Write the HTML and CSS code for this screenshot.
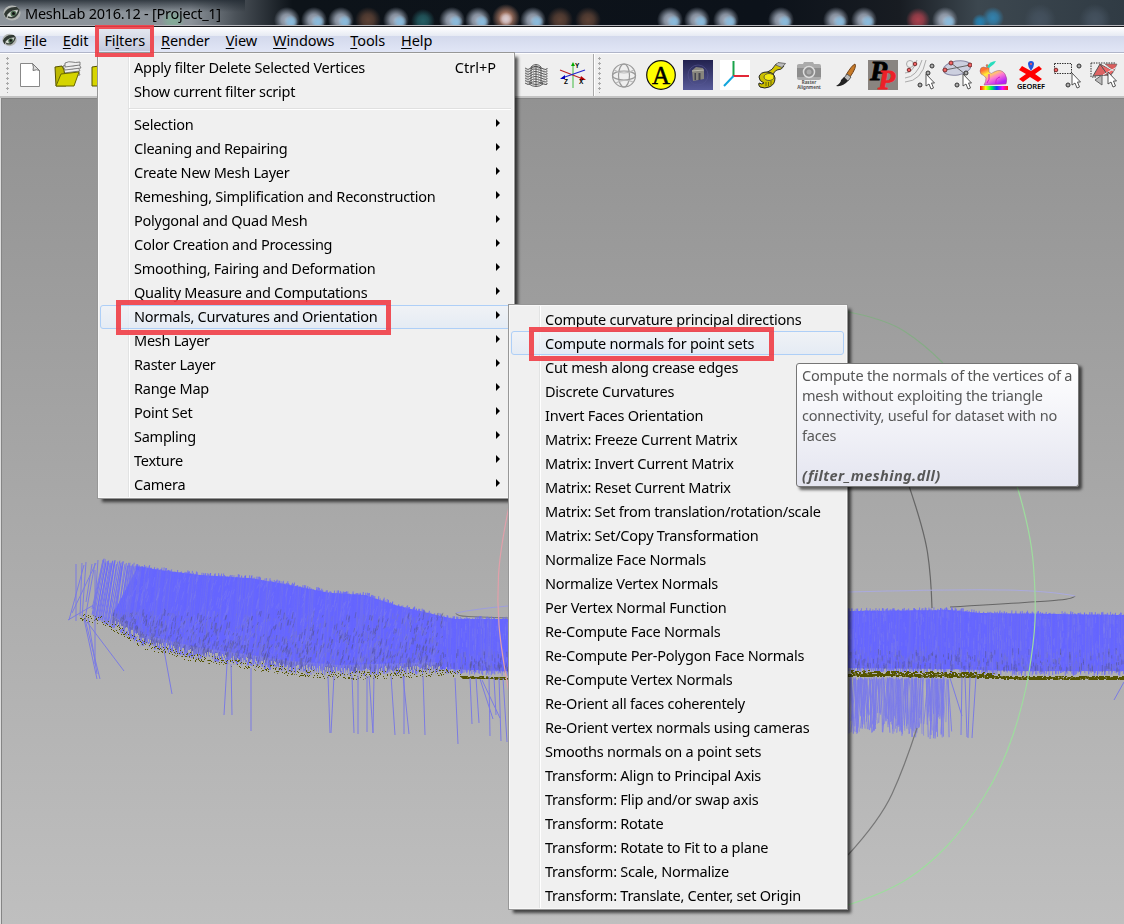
FILE: index.html
```html
<!DOCTYPE html>
<html lang="en">
<head>
<meta charset="utf-8">
<title>MeshLab 2016.12 - [Project_1]</title>
<link rel="stylesheet" href="styles.css">
</head>
<body>
<div class="window">
  <header class="titlebar">
    <canvas class="glass" width="1124" height="25"></canvas>
    <svg class="eye" viewBox="0 0 18 16"><use href="#eye"/></svg>
    <span class="title-text">MeshLab 2016.12 - [Project_1]</span>
  </header>
  <nav class="menubar">
    <svg class="eye eye-small" viewBox="0 0 18 16"><g id="eye"><ellipse cx="9" cy="8" rx="8.600" ry="7.400" fill="#b4b7b4"/><path d="M1 9Q4 1 14 2L17 5Q10 4 6 8L3 13Z" fill="#303833"/><path d="M4 10Q9 5 16 6Q15 11 10 12.500Q6 13 4 10Z" fill="#d4dad3"/><circle cx="10.500" cy="8.800" r="3" fill="#527155"/><circle cx="10.500" cy="8.600" r="1.500" fill="#111"/><path d="M5 12Q13 15 16 5" stroke="#353d37" stroke-width="1.500" fill="none"/></g></svg>
    <span class="menu-title"><u>F</u>ile</span>
    <span class="menu-title"><u>E</u>dit</span>
    <span class="menu-title open">Fi<u>l</u>ters</span>
    <span class="menu-title"><u>R</u>ender</span>
    <span class="menu-title"><u>V</u>iew</span>
    <span class="menu-title"><u>W</u>indows</span>
    <span class="menu-title"><u>T</u>ools</span>
    <span class="menu-title"><u>H</u>elp</span>
  </nav>
  <div class="toolbar">
    <div class="tools tools-file">
      <i class="grip"></i>
      <svg class="tool" viewBox="0 0 30 30"><path d="M5.500 3.500h12l7 7v16h-19z" fill="#fff" stroke="#888"/><path d="M17.500 3.500Q19 7 18 10.500Q22 9 24.500 10.500Z" fill="#ddd" stroke="#777"/></svg>
      <svg class="tool" viewBox="0 0 30 30"><g fill="#eee" stroke="#666" stroke-width=".8"><path d="M10 12q4-3 7-1t9-1l2 5-16 2z"/><path d="M10 9q4-3 7-1t9-1l2 4-16 2z"/><path d="M11 6q4-3 7-1t9-1l2 4-16 2z"/><path d="M13 3q4-2 7-1t8 0v3l-15 2z"/></g><path d="M3 7l7-1 2 4 2 16H4z" fill="#bdb900" stroke="#555200"/><path d="M4 26l5-12 18-2-5 14z" fill="#d5d400" stroke="#686700"/></svg>
      <svg class="tool" viewBox="0 0 30 30"><path d="M3 7l7-1 2 4h14v16H3z" fill="#d7d500" stroke="#555200"/></svg>
    </div>
    <div class="tools tools-view">
      <svg class="tool" viewBox="0 0 30 30"><g fill="none" stroke="#444" stroke-width=".9"><path d="M4 8q3 3 6 0t10 0t6 0M4 10.500q3 3 6 0t10 0t6 0M4 13q3 3 6 0t10 0t6 0M4 15.500q3 3 6 0t10 0t6 0M4 18q3 3 6 0t10 0t6 0M4 20.500q3 3 6 0t10 0t6 0M4 23q3 3 6 0t10 0t6 0"/><path d="M10 7q5-5 10 0M10 9q5-5 10 0M8 24q7 5 14 0M8 22q7 5 14 0" /><path d="M10 7v16M20 7v16M15 5v21" stroke="#555"/><path d="M5 8v14M7 9v15M12.500 6v19M17.500 6v19M23 9v15M25.500 8v14" stroke="#999" stroke-width=".7"/></g></svg>
      <svg class="tool" viewBox="0 0 30 30"><path d="M15 5v23" stroke="#98d598" stroke-width="2"/><path d="M15 2l-2 4h4z" fill="#00a900"/><path d="M2 10l23 9" stroke="#b22" stroke-width="1.200"/><path d="M27 10L4 18" stroke="#22c" stroke-width="1.200"/><path d="M23 16l5 4-6 0z" fill="#b00"/><path d="M2 19l5-4v4z" fill="#00b"/><g class="axis-label"><text x="17" y="8">Y</text><text x="6" y="24">Z</text><text x="21" y="24">X</text></g></svg>
    </div>
    <div class="tools tools-edit">
      <i class="grip"></i>
      <svg class="tool" viewBox="0 0 30 30"><g fill="none" stroke="#999" stroke-width="1.200"><circle cx="15" cy="15.500" r="11.500"/><ellipse cx="15" cy="15.500" rx="5.500" ry="11.500"/><ellipse cx="15" cy="15.500" rx="11.500" ry="4.500"/><path d="M5 10Q15 16 25 10M7 23Q15 18 24 22" stroke="#bbb"/></g></svg>
      <svg class="tool" viewBox="0 0 30 30"><circle cx="15" cy="15" r="14.300" fill="#ff0" stroke="#111" stroke-width="1.200"/><text class="letter-a" x="15" y="23.500">A</text></svg>
      <svg class="tool" viewBox="0 0 30 30"><defs><linearGradient id="night" x2="0" y2="1"><stop stop-color="#22224f"/><stop offset="1" stop-color="#585b99"/></linearGradient></defs><path d="M0 0h30v30H0z" fill="url(#night)"/><circle cx="15" cy="15" r="10" fill="none" stroke="#555592" stroke-width=".6"/><path d="M9 10.500l4-3.500 7 1 1 3v8l-11 2z" fill="#87857d"/><path d="M11.500 13h1.500v7h-1.500zM15.500 13h2v7h-2z" fill="#454550"/><path d="M9 11l12-1" stroke="#bab8ad"/></svg>
      <svg class="tool" viewBox="0 0 30 30"><path d="M0 0h30v30H0z" fill="#fff"/><path d="M13.500 1v15" stroke="#19a34a" stroke-width="2"/><path d="M13 16h16" stroke="#e22736" stroke-width="2"/><path d="M13.500 16l-9.500 10" stroke="#11a5dc" stroke-width="2"/></svg>
      <svg class="tool" viewBox="0 0 30 30"><path d="M9 13Q16 10 19 4L27 6Q25 10 20 10Q17 11 16 15Z" fill="#d4c600" stroke="#333"/><path d="M18.500 5L21 2.500l7.500 1-3.500 4z" fill="#bbb" stroke="#555" stroke-width=".8"/><path d="M2 17Q3 12 10 12Q17 12 18 18Q18 25 12 27Q8 29 3 27Q1 25 2 23Q5 25 7 23Q2 21 2 17Z" fill="#c9bd00" stroke="#222"/><ellipse cx="12" cy="17" rx="5" ry="3.500" fill="#f2e810" stroke="#444" stroke-width=".8"/><path d="M9 22v4M11.500 22v4M14 21v4" stroke="#555200" stroke-width=".8"/></svg>
      <svg class="tool" viewBox="0 0 30 30"><path d="M3 5.500q0-1.500 2-1.500h4l1-2h9l1 2h5q2 0 2 2v12q0 2-2 2H5q-2 0-2-2z" fill="#ababab"/><path d="M3 8h24v9H3z" fill="#8d8d8d"/><circle cx="15" cy="12" r="5.500" fill="#8a8a8a" stroke="#ddd" stroke-width="1.500"/><circle cx="15" cy="12" r="2.500" fill="#aaa"/><g class="caption"><text x="15" y="24">Raster</text><text x="15" y="29">Alignment</text></g></svg>
      <svg class="tool" viewBox="0 0 30 30"><path d="M24 4Q26 7 19 17L15 15Q21 5 24 4Z" fill="#c77a27" stroke="#70421a"/><path d="M16 14l4 3-3 4-4-3z" fill="#bbb" stroke="#555"/><path d="M13 17l4 4Q12 27 5 26Q10 23 10 20Z" fill="#222"/></svg>
      <svg class="tool" viewBox="0 0 30 30"><path d="M0 0h30v30H0z" fill="#898480"/><text class="letter-p" x="2" y="20">P</text><text class="letter-p red" x="10" y="29">P</text></svg>
      <svg class="tool" viewBox="0 0 30 30"><g fill="none" stroke="#aaa"><circle cx="5" cy="4" r="3.500"/><path d="M0 13Q8 13 12 0M0 18Q12 17 17 0M0 22Q17 21 21 0"/></g><circle class="node-red" cx="10" cy="4" r="1.800"/><circle class="node-red" cx="4" cy="10" r="1.800"/><circle class="node" cx="27" cy="6" r="2"/><circle class="node" cx="23" cy="13" r="2"/><circle class="node" cx="15" cy="25" r="2"/><path id="pointer" class="pointer" d="M21 14v12l3-2 2 5 2.500-1-2-5h3z"/></svg>
      <svg class="tool" viewBox="0 0 30 30"><ellipse cx="15" cy="8" rx="14" ry="7" transform="rotate(-10 15 8)" fill="#cccfdf" stroke="#8888a5"/><path d="M3 10L28 5M9 3l14 11" stroke="#666"/><circle class="node-red" cx="3" cy="10" r="2"/><circle class="node-red" cx="9" cy="3" r="2"/><circle class="node-red" cx="28" cy="5" r="2"/><circle class="node" cx="24" cy="13" r="2"/><circle class="node" cx="15" cy="25" r="2"/><use href="#pointer"/></svg>
      <svg class="tool" viewBox="0 0 30 30"><defs><linearGradient id="rainbow"><stop stop-color="#f02"/><stop offset=".2" stop-color="#ff0"/><stop offset=".4" stop-color="#0f4"/><stop offset=".6" stop-color="#04f"/><stop offset=".8" stop-color="#f0f"/><stop offset="1" stop-color="#f20"/></linearGradient><linearGradient id="fur" x2=".6" y2="1"><stop stop-color="#ffa400"/><stop offset=".25" stop-color="#ff6a36"/><stop offset=".45" stop-color="#ffef36"/><stop offset=".7" stop-color="#ff7dd0"/><stop offset="1" stop-color="#b520fa"/></linearGradient></defs><path d="M7 5Q9 3 10 8L10 12Q12 15 15 12Q22 8 26 14Q29 19 27 24L5 25Q7 22 7 18Q5 15 2 14Q0 11 2 8Q4 6 8 8Z" fill="url(#fur)" stroke="#96506e" stroke-width=".5"/><path d="M8 7Q11 1 17 1L15 4L10 8Z" fill="#27ddbc"/><path d="M17 24Q16 18 21 17M10 14Q11 20 8 23" fill="none" stroke="#d51ec9"/><path d="M1 26h28v4H1z" fill="url(#rainbow)"/></svg>
      <svg class="tool" viewBox="0 0 30 30"><path d="M6 6l9 5 8-5 3 3-7 5 7 5-4 3-8-5-7 5-4-3 7-5-7-4z" fill="#f00"/><path d="M12 4a3 3 0 016 0q0 3-3 7q-3-4-3-7" fill="#2455dc"/><circle cx="15" cy="4" r="1" fill="#ff5e50"/><text class="georef" x="15" y="29">GEOREF</text></svg>
      <svg class="tool" viewBox="0 0 30 30"><path d="M1.500 3.500h17v10h-17z" fill="none" stroke="#333" stroke-dasharray="1.500 1"/><circle class="node-red" cx="3" cy="10" r="1.800"/><circle class="node" cx="26" cy="6" r="2"/><circle class="node" cx="15" cy="25" r="2"/><use href="#pointer" x="-2" y="-1"/></svg>
      <svg class="tool" viewBox="0 0 30 30"><path d="M1 3h24M1 3v14h6" fill="none" stroke="#333" stroke-dasharray="1.500 1"/><path d="M3 16l7-12 8 11z" fill="#dd6464" stroke="#555"/><path d="M10 4l14 7-5 6z" fill="#e66" stroke="#555"/><path d="M15 4h12l-3 7z" fill="#db5d5d" stroke="#666" stroke-width=".6"/><path d="M12 4l15 9M13 15L27 7" stroke="#eee"/><path d="M5 20l7-5v10z" fill="#bbb" stroke="#666"/><use href="#pointer" x="-3" y="-2"/></svg>
    </div>
  </div>
  <main class="viewport">
    <canvas class="scene" width="1122" height="826"></canvas>
  </main>
</div>

<div class="menu filters-menu">
  <div class="item">Apply filter Delete Selected Vertices<span class="shortcut">Ctrl+P</span></div>
  <div class="item">Show current filter script</div>
  <div class="separator"></div>
  <div class="item sub">Selection</div>
  <div class="item sub">Cleaning and Repairing</div>
  <div class="item sub">Create New Mesh Layer</div>
  <div class="item sub">Remeshing, Simplification and Reconstruction</div>
  <div class="item sub">Polygonal and Quad Mesh</div>
  <div class="item sub">Color Creation and Processing</div>
  <div class="item sub">Smoothing, Fairing and Deformation</div>
  <div class="item sub">Quality Measure and Computations</div>
  <div class="item sub active">Normals, Curvatures and Orientation</div>
  <div class="item sub">Mesh Layer</div>
  <div class="item sub">Raster Layer</div>
  <div class="item sub">Range Map</div>
  <div class="item sub">Point Set</div>
  <div class="item sub">Sampling</div>
  <div class="item sub">Texture</div>
  <div class="item sub">Camera</div>
</div>

<div class="menu normals-menu">
  <div class="item">Compute curvature principal directions</div>
  <div class="item active">Compute normals for point sets</div>
  <div class="item">Cut mesh along crease edges</div>
  <div class="item">Discrete Curvatures</div>
  <div class="item">Invert Faces Orientation</div>
  <div class="item">Matrix: Freeze Current Matrix</div>
  <div class="item">Matrix: Invert Current Matrix</div>
  <div class="item">Matrix: Reset Current Matrix</div>
  <div class="item">Matrix: Set from translation/rotation/scale</div>
  <div class="item">Matrix: Set/Copy Transformation</div>
  <div class="item">Normalize Face Normals</div>
  <div class="item">Normalize Vertex Normals</div>
  <div class="item">Per Vertex Normal Function</div>
  <div class="item">Re-Compute Face Normals</div>
  <div class="item">Re-Compute Per-Polygon Face Normals</div>
  <div class="item">Re-Compute Vertex Normals</div>
  <div class="item">Re-Orient all faces coherentely</div>
  <div class="item">Re-Orient vertex normals using cameras</div>
  <div class="item">Smooths normals on a point sets</div>
  <div class="item">Transform: Align to Principal Axis</div>
  <div class="item">Transform: Flip and/or swap axis</div>
  <div class="item">Transform: Rotate</div>
  <div class="item">Transform: Rotate to Fit to a plane</div>
  <div class="item">Transform: Scale, Normalize</div>
  <div class="item">Transform: Translate, Center, set Origin</div>
</div>

<div class="tooltip">Compute the normals of the vertices of a<br>mesh without exploiting the triangle<br>connectivity, useful for dataset with no<br>faces<br><br><strong>(filter_meshing.dll)</strong></div>

<div class="mark mark-filters"></div>
<div class="mark mark-category"></div>
<div class="mark mark-command"></div>
<script src="scene.js"></script>
</body>
</html>
```
FILE: styles.css
```css
* { box-sizing: border-box; }
body {
  margin: 0;
  width: 1124px;
  height: 924px;
  overflow: hidden;
  position: relative;
  font: 14.5px/24px "Noto Sans", "Open Sans", sans-serif;
  letter-spacing: -0.25px;
  color: #000;
}
.window { display: flex; flex-direction: column; height: 924px; }

.titlebar {
  height: 27px;
  position: relative;
  display: flex;
  align-items: center;
  padding: 0 0 0 3px;
  gap: 4px;
  background: #0c1016;
  border-bottom: 1px solid #15171b;
  box-shadow: inset 0 -1px #b5b5ba;
}
.glass { position: absolute; left: 0; top: 0; }
.eye { position: relative; width: 18px; height: 16px; flex: none; }
.title-text { position: relative; color: #000; line-height: 26px; }

.menubar {
  height: 26px;
  display: flex;
  align-items: stretch;
  padding-left: 2px;
  background: linear-gradient(#fff, #e6eaf3 9px, #d3d9ec 9px, #e1e6f6 25px);
  border-bottom: 1px solid #b0b5c9;
}
.eye-small { width: 15px; height: 14px; margin: 6px -1px 0 0; }
.menu-title { padding: 0 8px; line-height: 27px; letter-spacing: -0.1px; }
.menu-title u { text-decoration-thickness: 1px; text-underline-offset: 2px; }
.menu-title.open {
  margin: 1px 0;
  line-height: 25px;
  border-radius: 3px;
  background: linear-gradient(#e5e8f0, #c4cadd);
}

.toolbar {
  height: 45px;
  display: flex;
  background: #efefef;
  border-top: 1px solid #fff;
  border-bottom: 2px solid #c3c3c3;
}
.tools { display: flex; align-items: center; gap: 7px; }
.tools-file { width: 512px; padding-left: 6px; }
.tools-view { width: 82px; padding-left: 9px; border-right: 1px solid #aaa; }
.tools-edit { padding-left: 4px; box-shadow: inset 1px 0 #fff; }
.grip {
  width: 4px;
  height: 36px;
  margin-right: -2px;
  background: radial-gradient(circle at 1.5px 1.5px, #aaa 1px, transparent 1.4px) 0 0 / 4px 5px;
}
.tools-edit .grip { margin-right: 0; }
.tool { width: 30px; height: 30px; flex: none; }
.axis-label { font: bold 6.5px "Liberation Sans", sans-serif; letter-spacing: 0; }
.letter-a { font: 25px "Liberation Serif", serif; text-anchor: middle; stroke: #000; stroke-width: .5; }
.letter-p { font: italic bold 28px "Liberation Serif", serif; stroke: #000; stroke-width: .8; }
.letter-p.red { fill: #ec2027; stroke: #ec2027; }
.caption { font: bold 4.5px "Noto Sans", sans-serif; text-anchor: middle; letter-spacing: 0; fill: #555; }
.georef { font: 600 7.5px "Noto Sans", sans-serif; letter-spacing: -.1px; text-anchor: middle; }
.node { fill: #aaa; stroke: #333; }
.node-red { fill: #f26363; stroke: #782d2d; }
.pointer { fill: #fff; stroke: #444; stroke-width: .9; }

.viewport {
  flex: 1;
  padding-left: 1px;
  background: linear-gradient(#929292, #bfbfbf);
  border-left: 1px solid #ddd;
  box-shadow: inset 0 1px #858585, inset 1px 0 #858585;
}
.scene { display: block; }

.menu {
  position: absolute;
  border: 1px solid #979797;
  background: linear-gradient(90deg, transparent 30px, #e2e3e3 30px 31px, #fff 31px 32px, transparent 32px) #f0f0f0;
  box-shadow: inset 0 0 0 1px #f8f8f8, 4px 4px 3px -1px rgba(0, 0, 0, .65);
  padding: 3px 2px;
}
.filters-menu { left: 97px; top: 52px; width: 418px; height: 447px; }
.normals-menu { left: 508px; top: 304px; width: 340px; height: 606px; }
.item {
  height: 24px;
  padding: 0 0 2px 33px;
  border: 1px solid transparent;
  border-radius: 3px;
  line-height: 22px;
  white-space: nowrap;
  display: flex;
  align-items: center;
}
.normals-menu { padding: 2px; }
.normals-menu .item { padding-bottom: 0; margin-right: 1px; }
.shortcut { margin-left: auto; padding-right: 15px; letter-spacing: 0; }
.sub::after {
  content: "";
  margin: -2px 11px 0 auto;
  border: 4px solid transparent;
  border-left-color: #000;
  border-right: 0;
}
.item.active { border-color: #aecff7; background: linear-gradient(rgba(240, 243, 248, .7), rgba(226, 234, 245, .8)); }
.separator { height: 2px; margin: 4px 1px 3px 29px; border-top: 1px solid #e0e0e0; background: #fff; }

.tooltip {
  position: absolute;
  left: 796px;
  top: 363px;
  width: 283px;
  height: 124px;
  padding: 1px 5px;
  border: 1px solid #767676;
  border-radius: 3px;
  background: linear-gradient(#fff, #e4e5f0);
  box-shadow: 3px 3px 3px rgba(0, 0, 0, .6);
  color: #575757;
  line-height: 20px;
  letter-spacing: -0.2px;
  white-space: nowrap;
}
.tooltip strong { font-style: italic; letter-spacing: .4px; }

.mark { position: absolute; border: 5px solid rgba(240, 61, 70, .9); }
.mark-filters { left: 95px; top: 25px; width: 59px; height: 32px; border-width: 4px; }
.mark-category { left: 116px; top: 300px; width: 275px; height: 35px; }
.mark-command { left: 529px; top: 327px; width: 245px; height: 34px; }
```
FILE: scene.js
```js
// Deterministic generator keeps the point cloud stable between loads.
let seed = 4217;
function rnd() {
  seed = (seed * 1664525 + 1013904223) >>> 0;
  return seed / 4294967296;
}

// Interpolates y along a list of [x, y] stops.
function along(stops, x) {
  for (let i = 1; i < stops.length; i++) {
    if (x <= stops[i][0]) {
      const [x0, y0] = stops[i - 1], [x1, y1] = stops[i];
      return y0 + (y1 - y0) * (x - x0) / (x1 - x0);
    }
  }
  return stops[stops.length - 1][1];
}

function drawScene() {
  const c = document.querySelector('.scene').getContext('2d');
  c.translate(-2, -98);
  const line = (x0, y0, x1, y1, color, w) => {
    c.strokeStyle = color;
    c.lineWidth = w || 1;
    c.beginPath(); c.moveTo(x0, y0); c.lineTo(x1, y1); c.stroke();
  };
  const curve = (pts, color, w) => {
    c.strokeStyle = color;
    c.lineWidth = w || 1.2;
    c.beginPath();
    c.moveTo(pts[0][0], pts[0][1]);
    for (let i = 1; i < pts.length - 1; i++) {
      const a = pts[i], b = pts[i + 1];
      const end = i === pts.length - 2 ? b : [(a[0] + b[0]) / 2, (a[1] + b[1]) / 2];
      c.quadraticCurveTo(a[0], a[1], end[0], end[1]);
    }
    c.stroke();
  };

  curve([[909, 486], [924, 530], [931, 575], [932, 608]], '#666');
  curve([[456, 613], [456, 616], [480, 617], [508, 618]], '#777');
  curve([[508, 606], [475, 609], [456, 613]], '#9d9ddc');
  curve([[950, 607], [1035, 602], [1073, 599], [1075, 596]], '#666');
  curve([[848, 592], [960, 589], [1050, 591], [1075, 596]], '#aaaadd');

  const top = [[98, 559], [130, 563], [160, 568], [200, 573], [250, 576], [290, 583], [330, 591], [365, 593],
    [395, 603], [440, 614], [455, 617], [508, 617], [848, 609], [950, 608], [980, 611], [1124, 613]];
  const bottom = [[78, 619], [100, 621], [120, 632], [145, 647], [170, 653], [195, 659], [230, 664], [290, 673],
    [340, 677], [440, 674], [508, 676], [848, 673], [945, 674], [1020, 676], [1124, 676]];
  const blues = ['#6666ff', '#6868fb', '#7070ef', '#6565ff'];

  c.fillStyle = '#6666ff';
  c.beginPath();
  c.moveTo(136, 570);
  for (let x = 136; x <= 1124; x += 4) c.lineTo(x, along(top, x) + 2);
  c.lineTo(1124, 670);
  for (let x = 1124; x >= 110; x -= 4) c.lineTo(x, along(bottom, x) - (x < 440 ? 12 : 5));
  c.fill();
  for (let x = 101; x < 1124; x += x < 128 ? .95 : .7) {
    const lean = x < 440 ? 9 * (1 - (x - 98) / 430) : (rnd() - .5) * 2;
    const y0 = along(bottom, x) - rnd() * 8;
    line(x - lean, Math.min(y0, along(bottom, x - lean)), x + rnd() * 3, along(top, x) - 1 + rnd() * 5, blues[rnd() * 4 | 0], .8);
  }
  // Darker strands and pinholes close to the surface.
  for (let i = 0; i < 2600; i++) {
    const left = i < 1500;
    const x = left ? 112 + rnd() * 330 : 440 + rnd() * 684;
    const b = along(bottom, x);
    const depth = left ? Math.min(55, b - 619) : 18;
    const y = b - 4 - Math.pow(rnd(), 1.8) * depth;
    line(x, y, x + (left ? 1 : 0), y - 2 - rnd() * 5, rnd() > .5 ? 'rgba(85,85,138,.6)' : 'rgba(120,120,195,.6)', .8);
  }
  for (let i = 0; i < 1500; i++) {
    const x = 105 + rnd() * 1019;
    const t = along(top, x), b = along(bottom, x);
    const y = t + rnd() * (b - t - 8);
    line(x, y, x + (x < 440 ? -2 : 0), y + 4 + rnd() * 7, 'rgba(133,133,232,.45)', .7);
  }
  // Gaps between strands at the lower rim.
  for (let i = 0; i < 380; i++) {
    const x = 115 + rnd() * 335;
    const y = along(bottom, x) - rnd() * 9;
    c.fillStyle = '#adadaf';
    c.fillRect(x | 0, y | 0, 1, 3);
  }
  // Source vertices.
  for (let x = 80; x < 1124; x++) {
    const heavy = x > 845 || x > 460 && x < 509;
    for (let k = 0; k < (heavy ? 3 : 2); k++) {
      if (!heavy && rnd() < .35) continue;
      const wild = x > 848 && x < 1000 ? 5 : 2;
      const y = heavy ? along(bottom, x) + 2 - Math.pow(rnd(), 2) * wild : along(bottom, x) + (rnd() - .7) * 8;
      c.fillStyle = rnd() > .15 ? '#555500' : '#77743b';
      c.fillRect(x, Math.round(y + (x > 460 && x < 509 ? 1 : 0)), x > 460 ? 2 : 1, x > 845 && rnd() < .5 ? 2 : 1);
    }
  }

  // Stray strands on the left tip.
  const tip = [[76, 564, 76, 621], [82, 563, 80, 616], [86, 562, 82, 618], [92, 564, 86, 602], [95, 563, 85, 619],
    [98, 560, 94, 616], [84, 565, 69, 620], [96, 563, 72, 613], [68, 620, 97, 603], [103, 560, 92, 609],
    [84, 619, 97, 679], [85, 619, 100, 679], [88, 618, 97, 674], [95, 570, 95, 664], [87, 622, 124, 671]];
  const strays = [[164, 650, 172, 694], [227, 664, 224, 715], [231, 664, 232, 715], [251, 668, 251, 731],
    [328, 676, 330, 733], [334, 676, 331, 733], [352, 676, 354, 733], [358, 676, 358, 734], [369, 676, 373, 733],
    [367, 676, 367, 732], [374, 676, 373, 733], [391, 676, 395, 735], [403, 676, 409, 734], [404, 676, 404, 734],
    [423, 676, 425, 735], [455, 678, 458, 744], [470, 678, 472, 724], [476, 678, 479, 723], [480, 679, 493, 719],
    [489, 676, 490, 736], [482, 680, 500, 718], [494, 678, 496, 715], [499, 678, 501, 741], [503, 678, 507, 742],
    [1124, 682, 1114, 700], [950, 678, 962, 716], [962, 677, 961, 735], [965, 677, 967, 737], [970, 677, 968, 738], [976, 677, 972, 738]];
  for (const s of tip.concat(strays)) line(...s, '#7b7be3', 1);
  for (let i = 0; i < 190; i++) {
    const x = 850 + rnd() * 98;
    line(x, 677 + rnd() * 3, Math.max(849, x + (rnd() - .55) * 9), 712 + rnd() * (x > 905 ? 27 : 22), i % 5 ? '#7a7aea' : '#8d8dd8', .9);
  }

  curve([[917, 728], [904, 768], [880, 820], [848, 855]], '#777');
  curve([[848, 312], [885, 319], [923, 343], [943, 363]], '#86ac86');
  curve([[1017, 486], [1031, 532], [1036, 600], [1034, 642], [1024, 702], [1002, 768], [966, 826], [928, 866], [885, 893], [848, 905]], '#9edc9e');
  curve([[509, 506], [500, 550], [497, 600], [501, 650], [509, 693]], '#e1a0aa');
}

// Blurred desktop icons seen through the title bar glass.
function drawGlass() {
  const c = document.querySelector('.glass').getContext('2d');
  const base = c.createLinearGradient(0, 0, 1124, 0);
  base.addColorStop(0, '#8d949b');
  base.addColorStop(.17, '#8b9299');
  base.addColorStop(.21, '#4a5158');
  base.addColorStop(.26, '#0d1319');
  base.addColorStop(.68, '#0c121a');
  base.addColorStop(.8, '#181c22');
  base.addColorStop(.87, '#3c474f');
  base.addColorStop(1, '#303b44');
  c.fillStyle = base;
  c.fillRect(0, 0, 1124, 25);
  const shade = c.createLinearGradient(0, 0, 0, 12);
  shade.addColorStop(0, 'rgba(35,43,51,.85)');
  shade.addColorStop(1, 'rgba(35,43,51,0)');
  c.fillStyle = shade;
  c.fillRect(0, 0, 245, 12);
  const blob = (x, y, r, color) => {
    const g = c.createRadialGradient(x, y, 1, x, y, r);
    g.addColorStop(0, color);
    g.addColorStop(.4, color + 'cc');
    g.addColorStop(1, color + '00');
    c.fillStyle = g;
    c.fillRect(x - r, 0, r * 2, 25);
  };
  for (const x of [287, 314, 341, 396, 452, 478, 533, 670, 697, 726, 781, 836, 864, 945]) {
    blob(x, 20, 13, '#a3adbd');
    blob(x + 4, 22, 7, '#8abbdc');
  }
  for (const x of [368, 560, 588]) blob(x, 20, 13, '#5b4135');
  blob(506, 18, 14, '#b47f69');
  blob(506, 19, 7, '#d9c9cd');
  blob(423, 21, 12, '#245c62');
  blob(918, 20, 12, '#a5404c');
  blob(980, 22, 8, '#267fae');
  blob(993, 18, 11, '#3280ab');
  blob(173, 21, 12, '#83ab98');
  blob(1040, 20, 16, '#44515e');
  blob(1095, 20, 16, '#44515e');
}

drawGlass();
drawScene();
```
